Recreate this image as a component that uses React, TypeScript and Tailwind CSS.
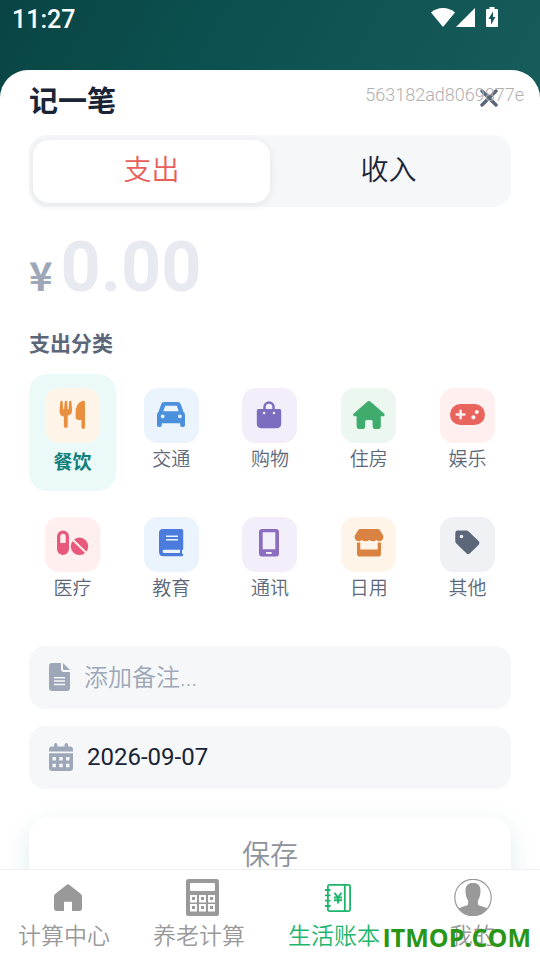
import { useState } from "react";
import type { ReactNode } from "react";
import clsx from "clsx";

interface Category {
  label: string;
  tile: string;
  icon: ReactNode;
}

const CATEGORIES: Category[] = [
  {
    label: "餐饮",
    tile: "bg-[#fff4e8] text-[#e8903f]",
    icon: (
      <>
        <path d="M16.6 12.8q1 0 1.1 1l.5 7.4h.9l.6-7.4q.1-1 1.2-1t1.2 1l.6 7.4h.9l.5-7.4q.1-1 1.1-1t1.2 1l.7 8.4q.1 4.6-4.4 5.4v10.4q0 2-1.9 2t-1.9-2V28.600q-4.500-.8-4.400-5.400l.8-9.400q.1-1 1.300-1z" />
        <path d="M37.800 12.800q2.200-.4 2.200 1.700v24.500q0 2-1.800 2t-1.800-2v-7h-2.600q-3.200 0-3.200-3.200v-3.500q0-10.500 7.200-12.500z" />
      </>
    ),
  },
  {
    label: "交通",
    tile: "bg-[#ebf3fc] text-[#4a90dc]",
    icon: (
      <path
        fillRule="evenodd"
        d="M20.500 14h13q2.600 0 3.400 2.400l2.400 7.200q1.700 1.200 1.700 3.400v10.300q0 1.700-1.700 1.700h-1.400q-1.700 0-1.700-1.700v-2H17.800v2q0 1.700-1.700 1.700h-1.400q-1.700 0-1.700-1.700V27q0-2.200 1.700-3.400l2.400-7.200Q17.900 14 20.500 14zM21.200 17.800l-1.900 5.500h15.400l-1.900-5.500zM16.800 28.300a1.900 1.900 0 1 0 3.800 0a1.900 1.900 0 1 0-3.800 0zM34 28.300a1.900 1.900 0 1 0 3.800 0a1.900 1.900 0 1 0-3.800 0z"
      />
    ),
  },
  {
    label: "购物",
    tile: "bg-[#f2effb] text-[#7c6dc0]",
    icon: (
      <>
        <path d="M22.500 23v-4a4.500 4.500 0 0 1 9 0v4" fill="none" stroke="currentColor" strokeWidth="2.500" />
        <path
          fillRule="evenodd"
          d="M16.500 21h21q1.700 0 1.700 1.700v12.800q0 4.800-4.800 4.800H19.600q-4.800 0-4.800-4.800V22.700q0-1.700 1.700-1.700zM20.800 25a1.300 1.300 0 1 0 2.600 0a1.300 1.300 0 1 0-2.600 0zM30.700 25a1.300 1.300 0 1 0 2.600 0a1.300 1.300 0 1 0-2.600 0z"
        />
      </>
    ),
  },
  {
    label: "住房",
    tile: "bg-[#ecf7f0] text-[#3fab6d]",
    icon: (
      <path d="M26.500 13.600q1.400-1.200 2.800 0l13.700 11.900q1.200 1.200.4 2.200-.4.500-1.400.5h-2.200v10.600q0 2.100-2.100 2.100h-4q-2.100 0-2.100-2.100v-5.300q0-1.500-1.500-1.500h-4.400q-1.500 0-1.500 1.500v5.300q0 2.100-2.100 2.100h-4.400q-2.100 0-2.100-2.100V28.200h-1.800q-1 0-1.400-.5-.8-1 .4-2.200z" />
    ),
  },
  {
    label: "娱乐",
    tile: "bg-[#ffefee] text-[#e8645c]",
    icon: (
      <>
        <rect x="10" y="16" width="35" height="21" rx="10.500" />
        <path d="M20.600 22.700v7.600M16.800 26.500h7.600" stroke="#ffefee" strokeWidth="2.600" strokeLinecap="round" />
        <circle cx="36.800" cy="24" r="2.100" fill="#ffefee" />
        <circle cx="33.400" cy="29.300" r="2.100" fill="#ffefee" />
      </>
    ),
  },
  {
    label: "医疗",
    tile: "bg-[#ffefee] text-[#e8597b]",
    icon: (
      <>
        <path
          fillRule="evenodd"
          d="M12 19.500a6 6 0 0 1 12 0v12.500a6 6 0 0 1-12 0zM15.300 26h5.400v-6.500a2.700 2.700 0 0 0-5.400 0z"
        />
        <circle cx="34.500" cy="29.300" r="8.700" />
        <path d="M27 22l15.500 15" stroke="#ffefee" strokeWidth="2" />
      </>
    ),
  },
  {
    label: "教育",
    tile: "bg-[#ebf3fc] text-[#4b7bdc]",
    icon: (
      <path
        fillRule="evenodd"
        d="M19 12h18.500q1.700 0 1.700 1.700v18q0 1-1.200 1.500v3.200q1.200.4 1.200 1.500 0 1.300-1.400 1.300H19.500q-4.500 0-4.500-4.500V16q0-4 4-4zM22 18.500v1.600h12v-1.600zM22 22v1.600h12V22zM20.300 32.700a1.700 1.700 0 0 0 0 3.400H36v-3.400z"
      />
    ),
  },
  {
    label: "通讯",
    tile: "bg-[#f2effb] text-[#8c6dc0]",
    icon: (
      <path
        fillRule="evenodd"
        d="M20 12h14q3 0 3 3v21.500q0 3-3 3H20q-3 0-3-3V15q0-3 3-3zM20.700 15.300v17h12.600v-17zM24 35v2h5.700v-2z"
      />
    ),
  },
  {
    label: "日用",
    tile: "bg-[#fff4e8] text-[#d98242]",
    icon: (
      <>
        <path d="M19.200 12h17.600q1.200 0 1.900 1l3.300 5.300q1.200 2.300-.2 4.300-1.300 1.700-3.300 1.700-1.700 0-3-1.300-1.500 1.300-3.600 1.300-2 0-3.700-1.300-1.700 1.300-3.700 1.300-2.200 0-3.700-1.300-1.400 1.300-3.200 1.300-2.200 0-3.400-1.700-1.400-2-.2-4.300l3.300-5.300q.7-1 1.900-1z" />
        <path d="M16 25.600h3.300v7h17.400v-7H40v11.200q0 2.800-2.800 2.800H18.800q-2.800 0-2.800-2.800z" />
      </>
    ),
  },
  {
    label: "其他",
    tile: "bg-[#f0f1f5] text-[#5c677a]",
    icon: (
      <path
        fillRule="evenodd"
        d="M17.600 13.600h9q1.200 0 2.100.9l10 9.800q1.600 1.700 0 3.400l-8.700 8.500q-1.800 1.700-3.600 0l-10.100-9.800q-1-.9-1-2.200v-8.300q0-2.300 2.300-2.300zM19.700 19.500a1.800 1.800 0 1 0 3.600 0a1.800 1.800 0 1 0-3.600 0z"
      />
    ),
  },
];

const NAV_ITEMS = [
  {
    label: "计算中心",
    icon: (
      <svg width="28" height="27" viewBox="0 0 28 27" fill="currentColor">
        <path d="M13.100.6q.9-.7 1.800 0l12 9.400q1.100.9 1.100 2.300v12.300q0 2.400-2.400 2.400H18v-9.300h-8V27H2.400Q0 27 0 24.600V12.300Q0 10.900 1.100 10z" />
      </svg>
    ),
  },
  {
    label: "养老计算",
    icon: (
      <svg width="33" height="37" viewBox="0 0 33 37" fill="currentColor">
        <rect width="33" height="37" rx="2.500" />
        <rect x="4" y="4" width="25" height="8" rx="1" fill="#fff" />
        {[4, 13, 22].map((x) =>
          [16, 25].map((y) => (
            <g key={`${x}-${y}`}>
              <rect x={x} y={y} width="7" height="7.500" fill="#fff" />
              <rect x={x + 2} y={y + 2} width="3" height="3" />
            </g>
          ))
        )}
      </svg>
    ),
  },
  {
    label: "生活账本",
    icon: (
      <svg width="26" height="28" viewBox="0 0 26 28" fill="none" stroke="currentColor" strokeWidth="1.800">
        <rect x="2.900" y=".9" width="22.200" height="26.200" rx="1.500" />
        <path d="M19.800 1v26M0 6h5.500M0 11.300h5.500M0 16.700h5.500M0 22h5.500" />
        <path d="M9.500 8.800l3.500 4.700 3.500-4.700M13 13v6.500M9 13.500h8M9 16.300h8" strokeWidth="1.900" />
      </svg>
    ),
  },
  {
    label: "我的",
    icon: (
      <svg width="38" height="37" viewBox="0 0 38 37" fill="none">
        <circle cx="19" cy="18.500" r="18.200" stroke="currentColor" strokeWidth="1.200" />
        <path
          d="M19 4c5 0 7.500 2.500 7.500 7.500 0 4-.8 7.500-2.600 10v3.500c0 1.500 3.100 2 9.600 4.300a18 18 0 0 1-29 0c6.500-2.300 9.600-2.800 9.600-4.300v-3.500c-1.800-2.500-2.600-6-2.600-10C11.500 6.500 14 4 19 4z"
          fill="currentColor"
        />
      </svg>
    ),
  },
];

function StatusBar() {
  return (
    <header className="flex h-[70px] shrink-0 items-start justify-between pl-3 pr-[42px] pt-1 text-white">
      <span className="text-[25px] leading-8 font-medium">11:27</span>
      <div className="flex pt-[3px]">
        <svg width="24" height="20" viewBox="0 0 24 20" fill="currentColor">
          <path d="M12 20L0 5.500Q5 1 12 1t12 4.500z" />
        </svg>
        <svg className="ml-px" width="19" height="20" viewBox="0 0 19 20" fill="currentColor">
          <path d="M19 1v19H0z" />
        </svg>
        <svg className="ml-[11px]" width="12" height="20" viewBox="0 0 12 20" fill="currentColor">
          <path fillRule="evenodd" d="M3.500 0h5v2H11q1 0 1 1v16q0 1-1 1H1q-1 0-1-1V3q0-1 1-1h2.500zM7 4.500L2.500 12H5v5.500L9.500 10H7z" />
        </svg>
      </div>
    </header>
  );
}

function TypeTabs({ value, onChange }: { value: string; onChange: (v: string) => void }) {
  return (
    <div className="flex h-[72px] rounded-[18px] bg-[#f5f7f9] px-1 pt-[5px] pb-1">
      {["支出", "收入"].map((type) => (
        <button
          key={type}
          type="button"
          onClick={() => onChange(type)}
          className={clsx(
            "flex-1 rounded-[16px] pb-0.5 text-[28px] font-[350]",
            value === type ? "bg-white text-[#e8605a] shadow-[0_2px_10px_rgba(0,0,0,0.08)]" : "text-[#1a2436]"
          )}
        >
          {type}
        </button>
      ))}
    </div>
  );
}

export default function App() {
  const [type, setType] = useState("支出");
  const [category, setCategory] = useState("餐饮");
  const [tab, setTab] = useState("生活账本");

  return (
    <div className="relative flex h-screen flex-col overflow-hidden bg-linear-to-br from-[#0a4444] via-[#0b504e] via-20% to-[#246c6c] font-[Roboto,'Noto_Sans_CJK_SC',sans-serif]">
      <StatusBar />

      <main className="min-h-0 flex-1 overflow-hidden rounded-t-[28px] bg-white px-[29px]">
        <div className="flex h-[65px] items-start justify-between pr-[13px]">
          <h1 className="pt-2 text-[29px] leading-[48px] font-bold text-[#1a2436]">记一笔</h1>
          <button type="button" aria-label="关闭" className="pt-[19px] text-[#5c677a]">
            <svg width="18" height="18" viewBox="0 0 18 18" stroke="currentColor" strokeWidth="3.400" strokeLinecap="round">
              <path d="M2 2l14 14M16 2L2 16" />
            </svg>
          </button>
        </div>

        <TypeTabs value={type} onChange={setType} />

        <label className="mt-5 flex h-20 items-baseline gap-2 font-bold">
          <span className="font-['Noto_Sans_CJK_SC',sans-serif] text-[40px] leading-[60px] text-[#9ea7b8]">¥</span>
          <input
            aria-label="金额"
            placeholder="0.00"
            className="h-20 w-full min-w-0 text-[70px] leading-[80px] outline-none placeholder:text-[#e7eaf0]"
          />
        </label>

        <h2 className="mt-[22px] text-[21px] leading-[30px] font-bold text-[#5c677a]">支出分类</h2>

        <div className="mt-[15px] grid grid-cols-5 gap-3">
          {CATEGORIES.map((c) => {
            const selected = c.label === category;
            return (
              <button
                key={c.label}
                type="button"
                onClick={() => setCategory(c.label)}
                className={clsx(
                  "flex h-[117px] flex-col items-center rounded-[18px] pt-3.5 text-[19px]",
                  selected ? "bg-[#ebfaf9] leading-10 font-bold text-[#0f7f7a]" : "leading-[34px] font-[350] text-[#5c677a]"
                )}
              >
                <svg width="55" height="55" viewBox="0 0 55 55" fill="currentColor" className={clsx("rounded-[14px]", c.tile)}>
                  {c.icon}
                </svg>
                {c.label}
              </button>
            );
          })}
        </div>

        <div className="mt-[26px] flex flex-col gap-[17px] text-2xl text-[#9ea7b8]">
          <label className="flex h-[63px] items-center rounded-[16px] bg-[#f5f7f9] px-5 pb-0.5">
            <svg width="21" height="28" viewBox="0 0 21 28" fill="currentColor" className="shrink-0">
              <path fillRule="evenodd" d="M3 0h9v6q0 3 3 3h6v16q0 3-3 3H3q-3 0-3-3V3q0-3 3-3zM5 14v1.500h11V14zM5 17.300v1.500h11v-1.500zM5 20.700v1.500h11v-1.500z" />
              <path d="M14 0l7 7h-5.500Q14 7 14 5.500z" />
            </svg>
            <input
              aria-label="备注"
              placeholder="添加备注..."
              className="ml-3.5 h-10 w-full min-w-0 pt-0.5 font-[350] text-[#1a2436] outline-none placeholder:text-[#9ea7b8]"
            />
          </label>
          <label className="flex h-[63px] items-center rounded-[16px] bg-[#f5f7f9] px-5 pb-0.5">
            <svg width="24" height="28" viewBox="0 0 24 28" fill="currentColor" className="shrink-0">
              <path d="M3 3.500h2V1.700q0-1.700 1.700-1.700T8.400 1.700v1.800h7.200V1.700q0-1.700 1.700-1.700T19 1.700v1.800h2q3 0 3 3v2H0v-2q0-3 3-3z" />
              <path
                fillRule="evenodd"
                d="M0 10.200h24V25q0 3-3 3H3q-3 0-3-3zM3.500 14v3.400h3.400V14zM10.300 14v3.400h3.400V14zM17.100 14v3.400h3.400V14zM3.500 20.800v3.400h3.400v-3.400zM10.300 20.800v3.400h3.400v-3.400zM17.100 20.800v3.400h3.400v-3.400z"
              />
            </svg>
            <input aria-label="日期" defaultValue="2026-09-07" className="ml-3.5 h-10 w-full min-w-0 text-[#1a2436] outline-none" />
          </label>
        </div>

        <button
          type="button"
          className="mt-7 h-[78px] w-full rounded-[20px] bg-white text-[28px] font-[350] text-[#8f939c] shadow-[0_8px_24px_rgba(15,127,122,0.14)]"
        >
          保存
        </button>
      </main>

      <nav className="relative grid h-[91px] shrink-0 grid-cols-4 border-t border-[#eeeff0] bg-white">
        {NAV_ITEMS.map((item) => (
          <button
            key={item.label}
            type="button"
            onClick={() => setTab(item.label)}
            className={clsx("group flex flex-col items-center pt-[9px]", tab === item.label ? "text-[#1db56c]" : "text-[#999999]")}
          >
            <span className="flex h-[37px] items-center">{item.icon}</span>
            <span className="pr-[7px] text-[23px] leading-[42px] font-[350] group-last:pr-0">{item.label}</span>
          </button>
        ))}
      </nav>

      <span className="pointer-events-none absolute top-[84px] right-4 text-[18px] leading-[22px] font-[350] text-[#b0b0b0]">
        563182ad8069877e
      </span>
      <span className="pointer-events-none absolute right-[9px] bottom-1.5 font-['Open_Sans',sans-serif] text-[25px] leading-[34px] font-bold text-[#2a9615]">
        ITMOP.COM
      </span>
    </div>
  );
}
